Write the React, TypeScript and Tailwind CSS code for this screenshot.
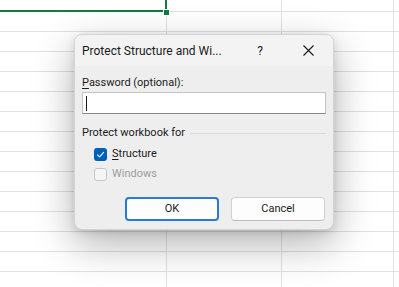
import React from 'react';

const rows = Array.from({ length: 14 });

const Sheet: React.FC = () => (
  <div className="absolute inset-0 flex flex-col">
    <div className="h-[12px] shrink-0 grid grid-cols-[166px_116px_112px_1fr] border-b border-[#e1e1e1]">
      <div className="border-r border-[#e1e1e1]" />
      <div className="border-r border-[#e1e1e1]" />
      <div className="border-r border-[#e1e1e1]" />
      <div />
    </div>
    {rows.map((_, i) => (
      <div
        key={i}
        className="h-[20px] shrink-0 grid grid-cols-[166px_116px_112px_1fr] border-b border-[#e1e1e1]"
      >
        <div />
        <div className="border-l border-r border-[#e1e1e1]" />
        <div className="border-r border-[#e1e1e1]" />
        <div />
      </div>
    ))}
    {/* selected cell outline */}
    <div className="absolute left-0 top-0 w-[167px] h-[12px] border-b-2 border-r-2 border-[#107c41]" />
    <div className="absolute left-[163px] top-[9px] w-[5px] h-[5px] bg-[#107c41] border border-white box-content" />
  </div>
);

const Check: React.FC<{ checked?: boolean; disabled?: boolean }> = ({ checked, disabled }) =>
  checked ? (
    <div className="w-[13px] h-[13px] rounded-[3px] bg-[#005fb8] flex items-center justify-center">
      <svg width="9" height="9" viewBox="0 0 9 9" fill="none">
        <path d="M1.5 4.8 L3.6 6.8 L7.6 2.4" stroke="white" strokeWidth="1.1" strokeLinecap="round" strokeLinejoin="round" />
      </svg>
    </div>
  ) : (
    <div
      className={`w-[13px] h-[13px] rounded-[3px] border ${
        disabled ? 'border-[#c6c6c6] bg-[#f5f5f5]' : 'border-[#8a8a8a] bg-white'
      }`}
    />
  );

export default function App() {
  return (
    <div className="relative w-[399px] h-[287px] bg-white overflow-hidden font-['Segoe_UI',Roboto,sans-serif] text-[11px] text-[#1b1b1b]">
      <Sheet />

      {/* Dialog */}
      <div className="absolute left-[74px] top-[34px] w-[260px] h-[196px] rounded-[8px] bg-[#eeeeee] border border-[#d4d4d4] shadow-[0_14px_40px_rgba(0,0,0,0.3),0_2px_8px_rgba(0,0,0,0.12)] flex flex-col overflow-hidden">
        <div className="h-[31px] shrink-0 bg-[#f3f3f3] flex items-center pl-[7px] pr-[19px]">
          <span className="text-[12px] leading-none text-[#1a1a1a] whitespace-nowrap">Protect Structure and Wi...</span>
          <span className="ml-auto text-[12px] leading-none text-[#1a1a1a]">?</span>
          <svg className="ml-[40px]" width="11" height="11" viewBox="0 0 11 11">
            <path d="M0.5 0.5 L10.5 10.5 M10.5 0.5 L0.5 10.5" stroke="#1a1a1a" strokeWidth="1.1" />
          </svg>
        </div>

        <div className="flex flex-col px-[7px] pt-[10px]">
          <div className="leading-[14px]">
            <span className="underline underline-offset-2">P</span>assword (optional):
          </div>
          <div className="mt-[2px] h-[22px] bg-white border border-[#c4c4c4] border-b-[#8a8a8a] flex items-center pl-[3px]">
            <div className="w-px h-[15px] bg-[#1a1a1a]" />
          </div>

          <div className="mt-[12px] flex items-center">
            <span className="leading-[14px] whitespace-nowrap">Protect workbook for</span>
            <div className="ml-[5px] flex-1 h-px bg-[#dcdcdc]" />
          </div>

          <div className="mt-[7px] ml-[12px] flex items-center gap-[5px] h-[14px]">
            <Check checked />
            <span>
              <span className="underline underline-offset-2">S</span>tructure
            </span>
          </div>
          <div className="mt-[6px] ml-[12px] flex items-center gap-[5px] h-[14px] text-[#9d9d9d]">
            <Check disabled />
            <span>Windows</span>
          </div>

          <div className="mt-[16px] flex justify-end gap-[12px] pr-[1px]">
            <button className="w-[94px] h-[24px] rounded-[4px] bg-[#fdfdfd] border-2 border-[#2a7ad4] text-[11px] text-[#1b1b1b]">
              OK
            </button>
            <button className="w-[94px] h-[24px] rounded-[4px] bg-[#fdfdfd] border border-[#d0d0d0] border-b-[#bdbdbd] text-[11px] text-[#1b1b1b]">
              Cancel
            </button>
          </div>
        </div>
      </div>
    </div>
  );
}
